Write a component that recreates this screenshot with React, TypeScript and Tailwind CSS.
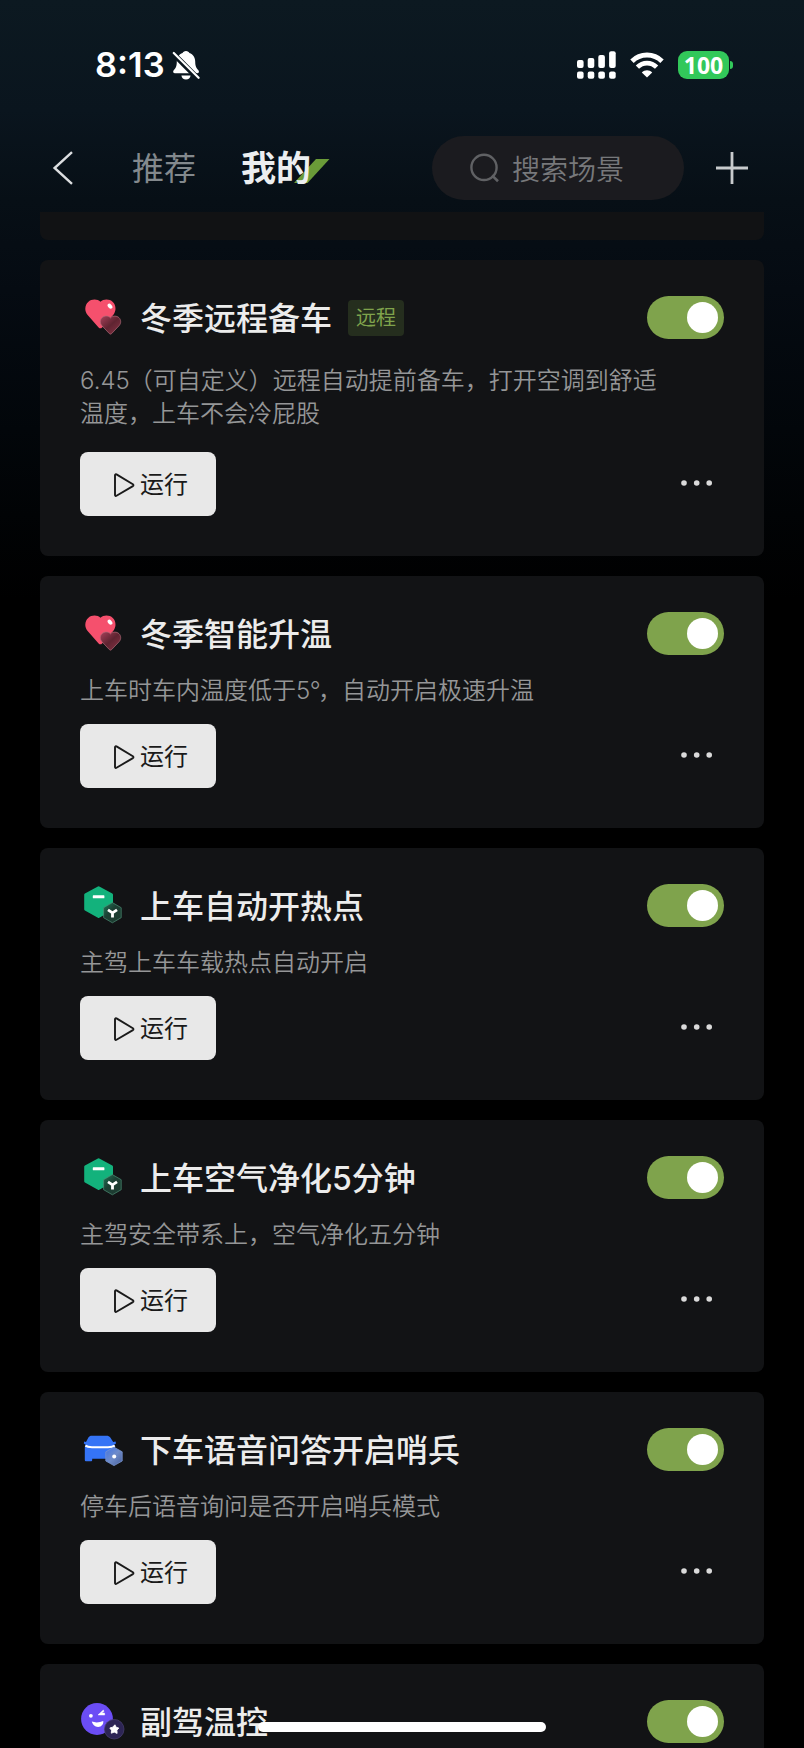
import React from "react";

type IconKind = "heart" | "hex" | "car" | "face";

interface Scene {
  title: string;
  icon: IconKind;
  lines: React.ReactNode[];
  remote?: boolean;
}

const scenes: Scene[] = [
  {
    title: "冬季远程备车",
    icon: "heart",
    lines: [
      <>
        <span className="-mr-px">6.45</span>（可自定义）远程自动提前备车，打开空调到舒适
      </>,
      "温度，上车不会冷屁股",
    ],
    remote: true,
  },
  {
    title: "冬季智能升温",
    icon: "heart",
    lines: [
      <>
        上车时车内温度低于<span className="-mr-[2px] tracking-[-0.6px]">5°</span>，自动开启极速升温
      </>,
    ],
  },
  { title: "上车自动开热点", icon: "hex", lines: ["主驾上车车载热点自动开启"] },
  { title: "上车空气净化5分钟", icon: "hex", lines: ["主驾安全带系上，空气净化五分钟"] },
  { title: "下车语音问答开启哨兵", icon: "car", lines: ["停车后语音询问是否开启哨兵模式"] },
  { title: "副驾温控", icon: "face", lines: [] },
];

function HeartIcon() {
  return (
    <svg viewBox="0 0 48 48" className="h-12 w-12 shrink-0">
      <defs>
        <linearGradient id="smallHeart" x1="0" y1="0" x2="1" y2="1">
          <stop offset="0" stopColor="#a8405a" />
          <stop offset="0.5" stopColor="#5f2431" />
          <stop offset="1" stopColor="#8a3346" />
        </linearGradient>
      </defs>
      <path
        d="M21.5 8.8C18.5 5.9 12.6 5.8 9.2 9C5.6 12.4 5.4 17.8 8.4 21.8L19.6 34.4C20.7 35.6 22 35.6 23.1 34.4L34.4 21.8C37.4 17.8 37.2 12.4 33.8 9C30.4 5.8 24.5 5.9 21.5 8.8Z"
        fill="#f5506d"
      />
      <ellipse cx="31" cy="13.2" rx="1.9" ry="2.9" fill="#fff" transform="rotate(-42 31 13.2)" />
      <path
        d="M31.5 24.9C29.4 22.6 25.4 22.5 23 24.7C20.8 26.9 20.8 30.2 22.8 32.6L30.4 40.6C31.1 41.3 31.9 41.3 32.6 40.6L40.2 32.6C42.2 30.2 42.2 26.9 40 24.7C37.6 22.5 33.6 22.6 31.5 24.9Z"
        fill="url(#smallHeart)"
        stroke="#b06a78"
        strokeWidth="0.7"
      />
    </svg>
  );
}

function HexIcon() {
  return (
    <svg viewBox="0 0 48 48" className="h-12 w-12 shrink-0">
      <defs>
        <linearGradient id="smallHex" x1="0" y1="0" x2="0.9" y2="1">
          <stop offset="0" stopColor="#1c7a58" />
          <stop offset="0.45" stopColor="#1c3f33" />
          <stop offset="1" stopColor="#1d3a30" />
        </linearGradient>
      </defs>
      <path
        d="M19.6 6.6L32.6 13.8V28.2L19.6 35.6L6.6 28.2V13.8Z"
        fill="#13b27c"
        stroke="#13b27c"
        strokeWidth="2.8"
        strokeLinejoin="round"
      />
      <rect x="13.8" y="14.3" width="11.6" height="3" rx="0.6" fill="#fff" />
      <path
        d="M33.4 21.6L42.2 26.7V36.7L33.4 41.8L24.6 36.7V26.7Z"
        fill="url(#smallHex)"
        stroke="#4c8f76"
        strokeWidth="0.7"
        strokeLinejoin="round"
      />
      <path d="M29 28.8L33.5 31.8L38 28.8M33.5 31.2V36.4" fill="none" stroke="#fff" strokeWidth="2.8" />
    </svg>
  );
}

function CarIcon() {
  return (
    <svg viewBox="0 0 48 48" className="h-12 w-12 shrink-0">
      <defs>
        <linearGradient id="carHex" x1="0" y1="0" x2="1" y2="1">
          <stop offset="0" stopColor="#3f74e8" />
          <stop offset="0.5" stopColor="#6f8cc9" />
          <stop offset="1" stopColor="#465f9c" />
        </linearGradient>
      </defs>
      <path
        d="M12.8 10.8H27.6C29.2 10.8 30.4 11.3 31.3 12.6L34.2 17L36.6 16.6L37 18.6L35.2 19.6L36 22.4V33.8H13.2V35C13.2 35.8 12.6 36.3 11.8 36.3H7.4C6.4 36.3 5.8 35.7 5.8 34.7V22.4L6.4 19.6L4.8 18.6L5.2 16.6L7 17L9.4 12.6C10.2 11.3 11.2 10.8 12.8 10.8Z"
        fill="#3574f6"
      />
      <path d="M6.4 20.6C8 21.9 10 22.2 13 22.2H29C32 22.2 34 21.9 35.8 20.6" fill="none" stroke="#fff" strokeWidth="2" />
      <path
        d="M35 22.2L43.2 26.8V36L35 40.6L26.8 36V26.8Z"
        fill="url(#carHex)"
        stroke="#7894cf"
        strokeWidth="0.8"
        strokeLinejoin="round"
      />
      <circle cx="35.2" cy="31.6" r="2" fill="#fff" />
    </svg>
  );
}

function FaceIcon() {
  return (
    <svg viewBox="0 0 48 48" className="h-12 w-12 shrink-0">
      <circle cx="18" cy="22" r="15.9" fill="#6b4df5" />
      <circle cx="11.9" cy="18.8" r="1.9" fill="#fff" />
      <path d="M24.3 13L19 17.9L25.7 18L25.5 16L22.7 16.1L25 14.3Z" fill="#fff" stroke="#fff" strokeWidth="0.5" />
      <path d="M12.8 24.6C16 25.8 20.8 25.6 24.2 24.1C24.8 27 22.6 30 19.1 30C16 30 13.4 27.6 12.8 24.6Z" fill="#fff" />
      <circle cx="35.2" cy="32.2" r="9.8" fill="#2d2555" stroke="#4a4272" strokeWidth="0.7" />
      <path
        d="M35.9 27.8L37.2 30.3L39.8 31.1L37.9 33.2L38.1 36.4L35.2 35.1L32.3 36.2L32.5 33.2L30.8 31L33.7 30.2Z"
        fill="#fff"
        stroke="#fff"
        strokeWidth="0.9"
        strokeLinejoin="round"
      />
    </svg>
  );
}

const icons: Record<IconKind, () => React.JSX.Element> = {
  heart: HeartIcon,
  hex: HexIcon,
  car: CarIcon,
  face: FaceIcon,
};

function Toggle() {
  return (
    <button
      aria-label="开关"
      className="flex h-[43px] w-[77.5px] shrink-0 items-center justify-end rounded-full bg-[#7fa34c] pr-1.5"
    >
      <span className="h-[31px] w-[31px] rounded-full bg-white" />
    </button>
  );
}

function SceneCard({ scene }: { scene: Scene }) {
  const Icon = icons[scene.icon];
  return (
    <article
      className={`flex shrink-0 flex-col rounded-lg bg-[#121315] px-10 ${scene.remote ? "h-[296px]" : "h-[252px]"}`}
    >
      <div className="mt-9 flex h-[43px] items-center">
        <div className="-ml-px mb-px">
          <Icon />
        </div>
        <h2 className="ml-[13px] pt-0.5 text-[32px] leading-[44px] font-medium text-[#ececec]">{scene.title}</h2>
        {scene.remote && (
          <span className="ml-4 flex h-9 w-14 items-center justify-center rounded bg-[#252e1e] pt-px text-[20px] leading-none text-[#7fa34c]">
            远程
          </span>
        )}
        <div className="ml-auto">
          <Toggle />
        </div>
      </div>
      {scene.lines.length > 0 && (
        <>
          <div
            className={`text-[24px] leading-[33px] font-[350] whitespace-nowrap text-[#959697] ${
              scene.remote ? "mt-[25px] mb-[22px]" : "mt-[19px] mb-[17px]"
            }`}
          >
            {scene.lines.map((line, i) => (
              <p key={i}>{line}</p>
            ))}
          </div>
          <div className="flex items-center justify-between">
            <button className="flex h-16 w-[136px] items-center rounded-lg bg-[#e8e8e8] pl-8 text-[24px] leading-none text-[#1a1a1a]">
              <svg viewBox="0 0 24 24" className="mt-0.5 mr-1 h-6 w-6">
                <path
                  d="M3 2.2V22C3 22.9 3.8 23.2 4.5 22.8L20.9 13.1C21.6 12.6 21.6 11.8 20.9 11.3L4.5 1.4C3.8 1 3 1.3 3 2.2Z"
                  fill="none"
                  stroke="#1a1a1a"
                  strokeWidth="1.9"
                  strokeLinejoin="round"
                />
              </svg>
              <span className="pt-0.5">运行</span>
            </button>
            <svg viewBox="0 0 34 8" className="mr-3 mb-0.5 h-2 w-[34px]">
              <circle cx="6" cy="4" r="2.8" fill="#dadada" />
              <circle cx="18.7" cy="4" r="2.8" fill="#dadada" />
              <circle cx="31.2" cy="4" r="2.8" fill="#dadada" />
            </svg>
          </div>
        </>
      )}
    </article>
  );
}

function StatusBar() {
  return (
    <div className="flex h-[130px] shrink-0 items-center pr-[71px] pl-[95px]">
      <span className="w-[70px] font-['Inter'] text-[34.5px] leading-none font-semibold whitespace-nowrap text-white">
        8:13
      </span>
      <svg viewBox="0 0 28 30" className="ml-[7px] h-[30px] w-7">
        <path
          d="M14 1C15.8 1 17 2 17.4 3.1C21.2 4.4 23.2 7.6 23.2 11.6C23.2 16.6 24.6 18.6 26.4 20.2C27.4 21.2 27 23.3 25.2 23.3H3C1.2 23.3 .6 21.4 1.7 20.2C3.6 18.4 4.8 16.6 4.8 11.6C4.8 7.6 6.8 4.4 10.6 3.1C11 2 12.2 1 14 1ZM9.4 25.6H18.6C18.2 28 16.6 29.6 14 29.6S9.8 28 9.4 25.6Z"
          fill="#fff"
        />
        <path d="M-1 1.5L27 29.5" stroke="#0a151d" strokeWidth="5.4" />
        <path d="M1.8 3L26.6 27.8" stroke="#fff" strokeWidth="2.2" strokeLinecap="round" />
      </svg>
      <svg viewBox="0 0 40 28" className="ml-auto h-7 w-10">
        <g fill="#fff">
          <rect x="0" y="9" width="6.6" height="8" rx="2" />
          <rect x="10.7" y="7" width="6.6" height="10" rx="2" />
          <rect x="21.3" y="4" width="6.6" height="13" rx="2" />
          <rect x="32.1" y="0.3" width="6.6" height="16.7" rx="2" />
          <rect x="0" y="20.5" width="6.6" height="7.3" rx="2" />
          <rect x="10.7" y="20.5" width="6.6" height="7.3" rx="2" />
          <rect x="21.3" y="20.5" width="6.6" height="7.3" rx="2" />
          <rect x="32.1" y="20.5" width="6.6" height="7.3" rx="2" />
        </g>
      </svg>
      <svg viewBox="0 0 34 26" className="ml-[13px] h-[26px] w-[34px]">
        <path d="M2 9.2C10.2 .9 23.8 .9 32 9.2" fill="none" stroke="#fff" strokeWidth="4.8" />
        <path d="M7.4 15.2C12.8 9.8 21.2 9.8 26.6 15.2" fill="none" stroke="#fff" strokeWidth="4.6" />
        <path d="M17 25.6L11.8 20.4C14.7 17.6 19.3 17.6 22.2 20.4Z" fill="#fff" />
      </svg>
      <div className="ml-[14px] flex h-7 w-[51px] items-center justify-center rounded-[9px] bg-[#32c85a] font-['Open_Sans'] text-[23px] leading-none font-bold text-white">
        100
      </div>
      <div className="ml-px h-2 w-[3px] rounded-r-full bg-[#32c85a]" />
    </div>
  );
}

function NavBar() {
  return (
    <nav className="flex h-[76px] shrink-0 items-center pl-[52px]">
      <svg viewBox="0 0 22 34" className="h-[34px] w-[22px]">
        <path d="M20 1.2L2.6 17L20 32.8" fill="none" stroke="#dcdee0" strokeWidth="2.4" />
      </svg>
      <span className="ml-[58px] w-16 pt-0.5 text-[32px] leading-none text-[#83898d]">推荐</span>
      <div className="relative ml-[45px] w-[70px] pt-0.5">
        <svg viewBox="0 0 36 24" className="absolute top-[10px] left-[53px] h-6 w-9">
          <path d="M22 0H35.5L13.5 24H0Z" fill="#6a9b38" />
        </svg>
        <span className="relative text-[35px] leading-none font-bold whitespace-nowrap text-[#eceef0]">我的</span>
      </div>
      <div className="ml-[121px] flex h-16 w-[252px] items-center rounded-full bg-[#1b1b1f] pl-[38px]">
        <svg viewBox="0 0 30 30" className="h-[30px] w-[30px]">
          <circle cx="14" cy="14.4" r="12.6" fill="none" stroke="#606164" strokeWidth="2.4" />
          <path d="M22 22.4L28 28.2" stroke="#606164" strokeWidth="2.6" />
        </svg>
        <span className="ml-3 pt-[3px] text-[28px] leading-none font-[350] text-[#77787b]">搜索场景</span>
      </div>
      <svg viewBox="0 0 32 32" className="ml-8 h-8 w-8">
        <path d="M16 0V32M0 16H32" stroke="#c8cbcd" strokeWidth="2.8" />
      </svg>
    </nav>
  );
}

export default function App() {
  return (
    <div className="relative flex h-[1748px] w-[804px] flex-col overflow-hidden bg-black bg-[linear-gradient(180deg,#0c1921_0px,#0a151e_110px,#070f16_200px,#050b12_290px,#02060a_430px,#000000_600px)] font-['Inter','Noto_Sans_CJK_SC',sans-serif]">
      <StatusBar />
      <NavBar />
      <main className="mt-1.5 flex flex-col gap-5 px-10">
        <div className="h-7 shrink-0 rounded-b-lg bg-[#111214]" />
        {scenes.map((scene) => (
          <SceneCard key={scene.title} scene={scene} />
        ))}
      </main>
      <div className="absolute bottom-4 left-[258px] h-2.5 w-72 rounded-full bg-white" />
    </div>
  );
}
